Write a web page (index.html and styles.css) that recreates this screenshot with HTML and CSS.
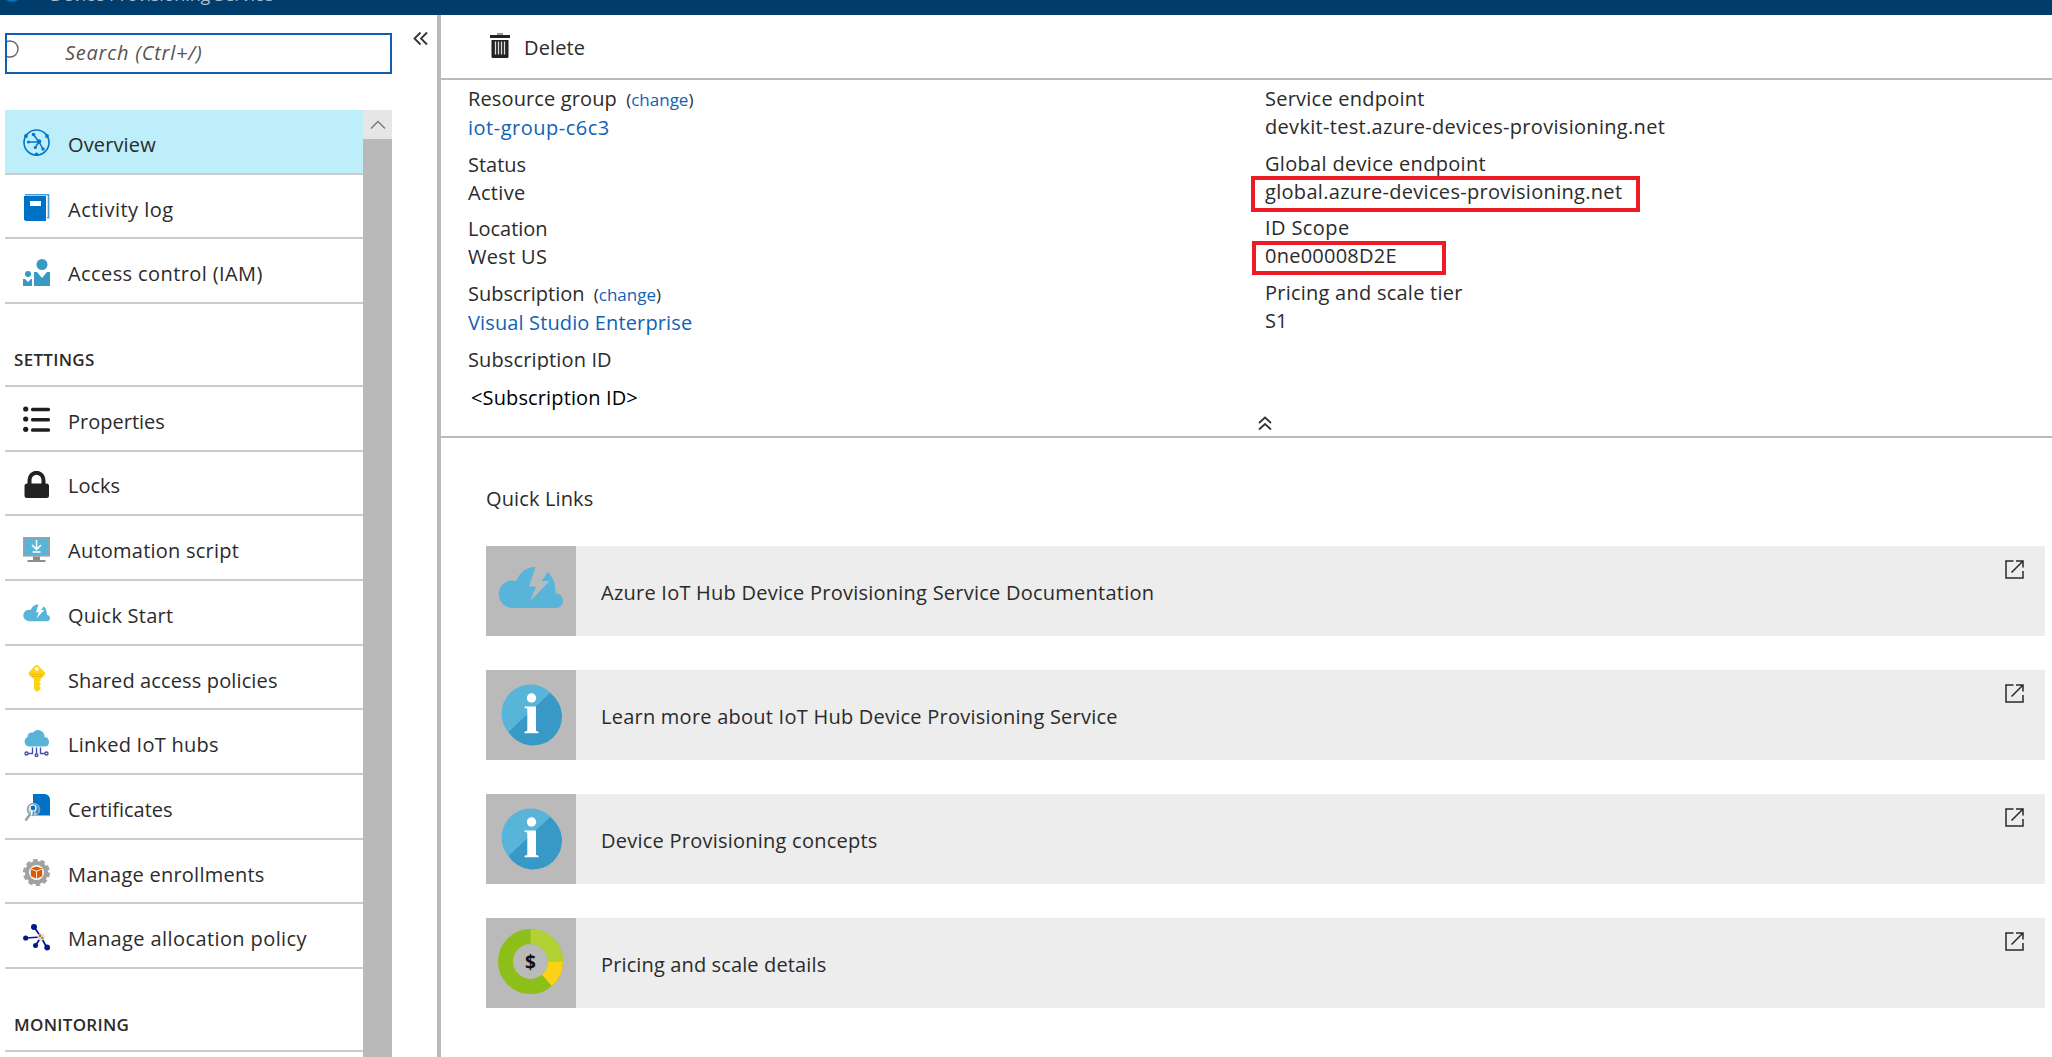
FILE: index.html
```html
<!DOCTYPE html>
<html lang="en">
<head>
<meta charset="utf-8">
<title>Device Provisioning Service</title>
<link rel="stylesheet" href="styles.css">
</head>
<body>
<header class="topbar"><svg class="topbar-icon" viewBox="0 0 20 20"><circle cx="10" cy="10" r="10" fill="#0072c6"/></svg><span class="topbar-title">Device Provisioning Service</span></header>
<div class="shell">
  <aside class="sidebar">
    <div class="sidebar-top">
      <div class="search">
        <svg class="search-icon" viewBox="0 0 12 18"><circle cx="3" cy="9" r="8" fill="none" stroke="#666" stroke-width="1.4"/></svg>
        <span class="search-hint">Search (Ctrl+/)</span>
      </div>
      <svg class="collapse" viewBox="0 0 16 16"><path d="M7.500 1.500 1.500 7.500l6 6M14 1.500 8 7.500l6 6" fill="none" stroke="#333" stroke-width="1.800"/></svg>
    </div>
    <div class="menu-wrap">
      <nav class="menu">
        <a class="item active"><svg class="icon" viewBox="0 0 27 27"><g fill="none" stroke="#0078d0"><circle cx="13.500" cy="13.500" r="12.500" stroke-width="1.600"/><path d="M16 13 5 13M16 13 10.500 5.500M16 13l4 7M16 13l-3.500 5" stroke-width="1.500"/></g><g fill="#0078d0"><circle cx="16" cy="12.500" r="2.300"/><circle cx="5.500" cy="13" r="1.600"/><circle cx="10.500" cy="5.500" r="1.800"/><circle cx="20" cy="20" r="1.700"/><circle cx="12.300" cy="18.500" r="1.600"/><circle cx="3" cy="7" r="1.900"/><circle cx="24" cy="7" r="1.900"/><circle cx="13.500" cy="25.300" r="1.800"/></g></svg><span class="sp-1">Overview</span></a>
        <a class="item"><svg class="icon" viewBox="0 0 27 27"><path d="M2 .8h23.500v23H24" fill="none" stroke="#4a9bd8" stroke-width="1.600"/><path d="M1 2h22v25H2.500L1 25.500z" fill="#0072c6"/><rect x="7" y="7" width="11" height="5" fill="#fff"/></svg><span class="sp-5">Activity log</span></a>
        <a class="item"><svg class="icon" viewBox="0 0 27 27"><g fill="#3999c6"><circle cx="19" cy="5.500" r="5.500"/><path d="M11 27V13h3l5 6 5-6h3v14z"/><circle cx="5" cy="15" r="3"/><path d="M0 27v-7h2l3 3 3-3h1v7z"/></g></svg><span class="sp-4">Access control (IAM)</span></a>
        <h2 class="group">SETTINGS</h2>
        <a class="item"><svg class="icon" viewBox="0 0 27 27"><g fill="#1e1e1e"><circle cx="2.700" cy="3" r="2.600"/><circle cx="2.700" cy="13" r="2.600"/><circle cx="2.700" cy="23.300" r="2.600"/><rect x="8" y="1.800" width="19" height="3.500" rx="1.500"/><rect x="8" y="12" width="19" height="3.500" rx="1.500"/><rect x="8" y="22.200" width="19" height="3.500" rx="1.500"/></g></svg><span>Properties</span></a>
        <a class="item"><svg class="icon" viewBox="0 0 27 27"><path d="M6.500 14V9a7 7.200 0 0 1 14 0v5" fill="none" stroke="#222" stroke-width="4"/><rect x="1.500" y="12.500" width="24.500" height="14.500" rx="2.500" fill="#222"/></svg><span>Locks</span></a>
        <a class="item"><svg class="icon" viewBox="0 0 27 27"><rect x=".8" y="1.800" width="25.400" height="18" fill="#59b4d9" stroke="#a0a1a2" stroke-width="1.600"/><path d="M10 20.500h7v3.500h5.500v2h-18v-2H10z" fill="#8c8d8e"/><path d="M13.500 4v9M9 9l4.500 4.500L18 9M9.500 16h8" fill="none" stroke="#fff" stroke-width="1.600"/></svg><span class="sp-2">Automation script</span></a>
        <a class="item"><svg class="icon" viewBox="0 0 65 65"><path d="M30 17h22v22H30z" fill="#fff"/><use href="#cloud" y="10"/></svg><span class="sp-2">Quick Start</span></a>
        <a class="item"><svg class="icon" viewBox="0 0 27 27"><path d="M12 .8q1.700-1.600 3.400 0l6 6.200q1.400 1.700 0 3.200L17.500 14v2l-1.500 1 1.500 1.200v1.600L16 21l1.500 1.300V24l-3.500 3-3-3V14L6.200 10.200q-1.400-1.600 0-3.200z" fill="#fcd116"/><circle cx="13.800" cy="4" r="2" fill="#fff"/><path d="M8.500 9.500h10.500M8.500 11.500h10.500" stroke="#e5b800" stroke-width=".8"/></svg><span class="sp-1">Shared access policies</span></a>
        <a class="item"><svg class="icon" viewBox="0 0 27 27"><path d="M6 16.500A5 5 0 0 1 4.500 7Q4.500 2 10 2.500q4-4.500 9-1 3 2 2.500 5.500 4.500.5 4.500 5 0 4.500-5 4.500z" fill="#59b4d9"/><g fill="none" stroke="#4450b0" stroke-width="1.400"><path d="M9.500 17.500v6H5M13.500 17.500V24M17.500 17.500v6H22"/><circle cx="3.500" cy="23.500" r="1.500"/><circle cx="13.500" cy="25.300" r="1.300"/><circle cx="23.500" cy="23.500" r="1.500"/></g></svg><span class="sp-2">Linked IoT hubs</span></a>
        <a class="item"><svg class="icon" viewBox="0 0 27 27"><path d="M10 0h12q5 1 5 6v15.500H10z" fill="#0072c6"/><path d="M8 19l-5.500 7.500" stroke="#a0a1a2" stroke-width="2.500"/><circle cx="10.500" cy="15.500" r="6" fill="#59b4d9" fill-opacity=".5" stroke="#a0a1a2" stroke-width="1.600"/><circle cx="10" cy="14" r="3" fill="#0072c6" stroke="#fff" stroke-width="1.200"/><path d="M8.500 17.500v4M12 17.500v4" stroke="#fff"/></svg><span>Certificates</span></a>
        <a class="item"><svg class="icon" viewBox="0 0 27 27"><circle cx="13.500" cy="13.500" r="11.900" fill="none" stroke="#a0a1a2" stroke-width="3.200" stroke-dasharray="4.400 3.080"/><circle cx="13.500" cy="13.500" r="9.500" fill="#fff" stroke="#a0a1a2" stroke-width="4"/><path d="M13.500 7.500l5.700 2v7.500l-5.700 3-5.700-3V9.500z" fill="#dd5900"/><path d="M8 10l5.500 2.200L19 10M13.500 12v8" fill="none" stroke="#fff" stroke-width=".9"/></svg><span class="sp-2">Manage enrollments</span></a>
        <a class="item"><svg class="icon" viewBox="0 0 27 27"><path d="M18 13 11 3M18 13 2.500 14M18 13l-5.500 8.500M18 13l6 11" stroke="#00188f" stroke-width="1.700"/><g fill="#00188f"><circle cx="11" cy="3" r="3"/><circle cx="2.700" cy="14" r="2.600"/><circle cx="12.500" cy="21.500" r="2.500"/><circle cx="24.200" cy="23.500" r="2.900"/></g><circle cx="18" cy="13" r="3.500" fill="#d8d8ea"/><path d="M16 13h2v-2.500h-2z" fill="#dd5900"/><path d="M18 13h2.500v2H18z" fill="#7fba00"/></svg><span class="sp-4">Manage allocation policy</span></a>
        <h2 class="group">MONITORING</h2>
      </nav>
      <div class="scrollbar"><div class="scroll-up"><svg viewBox="0 0 16 10"><path d="M1 8.500 8 1.500l7 7" fill="none" stroke="#777" stroke-width="1.400"/></svg></div></div>
    </div>
  </aside>
  <main class="main">
    <div class="toolbar">
      <svg class="trash" viewBox="0 0 20 26"><rect x="7" y="0" width="6" height="2" fill="#999"/><rect x="0" y="2" width="20" height="3" fill="#222"/><path d="M1.500 7h17v16.500q0 1.500-1.500 1.500H3q-1.500 0-1.500-1.500z" fill="#222"/><path d="M5.500 8.500v13M8.500 8.500v13M11.500 8.500v13M14.500 8.500v13" stroke="#ddd" stroke-width="1.300"/></svg>
      <span class="sp-1">Delete</span>
    </div>
    <section class="essentials">
      <dl class="facts">
        <div class="fact"><dt><span class="sp-1">Resource group</span> <small>(<a class="link">change</a>)</small></dt><dd class="sp-5"><a class="link">iot-group-c6c3</a></dd></div>
        <div class="fact"><dt>Status</dt><dd class="sp-3">Active</dd></div>
        <div class="fact"><dt>Location</dt><dd class="sp-3">West US</dd></div>
        <div class="fact"><dt>Subscription <small>(<a class="link">change</a>)</small></dt><dd class="sp-1"><a class="link">Visual Studio Enterprise</a></dd></div>
        <div class="fact"><dt class="cut sp-1">Subscription ID</dt><dd class="sub-id sp-1">&lt;Subscription ID&gt;</dd></div>
      </dl>
      <dl class="facts">
        <div class="fact"><dt class="sp-2">Service endpoint</dt><dd class="sp-3">devkit-test.azure-devices-provisioning.net</dd></div>
        <div class="fact"><dt class="sp-3">Global device endpoint</dt><dd class="marked sp-3"><span>global.azure-devices-provisioning.net</span><i class="mark mark-endpoint"></i></dd></div>
        <div class="fact"><dt class="sp-4">ID Scope</dt><dd class="marked sp-2"><span>0ne00008D2E</span><i class="mark mark-scope"></i></dd></div>
        <div class="fact"><dt class="sp-2">Pricing and scale tier</dt><dd>S1</dd></div>
      </dl>
      <svg class="fold" viewBox="0 0 14 15"><path d="M1 7l6-5.500L13 7M1 13.500 7 8l6 5.500" fill="none" stroke="#333" stroke-width="1.700"/></svg>
    </section>
    <section class="links">
      <h3 class="sp-1">Quick Links</h3>
      <a class="card"><span class="tile"><svg class="tile-icon" viewBox="0 0 65 65"><use href="#cloud" y="10"/></svg></span><span class="label sp-2">Azure IoT Hub Device Provisioning Service Documentation</span><svg class="ext" viewBox="0 0 19 19"><use href="#ext"/></svg></a>
      <a class="card"><span class="tile"><svg class="tile-icon" viewBox="0 0 65 65"><use href="#info"/></svg></span><span class="label sp-2">Learn more about IoT Hub Device Provisioning Service</span><svg class="ext" viewBox="0 0 19 19"><use href="#ext"/></svg></a>
      <a class="card"><span class="tile"><svg class="tile-icon" viewBox="0 0 65 65"><use href="#info"/></svg></span><span class="label sp-2">Device Provisioning concepts</span><svg class="ext" viewBox="0 0 19 19"><use href="#ext"/></svg></a>
      <a class="card"><span class="tile"><svg class="tile-icon" viewBox="0 0 65 65"><g fill="none" stroke-width="15" transform="translate(32.500 32.500)"><circle r="25" stroke="#8cbf1a"/><path d="M0-25A25 25 0 0 1 25 0" stroke="#b2d233"/><path d="M25 0A25 25 0 0 1 16.400 18.900" stroke="#fcd116"/></g><text x="32.500" y="39.500" text-anchor="middle" class="dollar">$</text></svg></span><span class="label sp-1">Pricing and scale details</span><svg class="ext" viewBox="0 0 19 19"><use href="#ext"/></svg></a>
    </section>
  </main>
</div>
<svg class="defs" width="0" height="0"><defs>
  <g id="cloud"><path d="M14 41A13.800 13.800 0 1 1 18.500 14Q23.500.5 37.500 0L31 19.500h7L32.500 34 51.500 14h-8L50 5Q58 13 57.500 26 65 27 65 34 64.500 41 57.500 41z" fill="#59b4d9"/></g>
  <g id="info"><circle cx="32.500" cy="32.500" r="29" fill="#59b4d9"/><path d="M52 12A29 29 0 1 1 10.500 51z" fill="#3999c6"/><circle cx="33.500" cy="17" r="4.700" fill="#fff"/><path d="M26.500 25.500h11.500v24q0 1 2.500 1.300v1.400h-14v-1.400q2.800-.3 2.800-1.300v-21q0-1.500-2.800-1.700z" fill="#fff"/></g>
  <g id="ext" fill="none" stroke="#2a2a2a" stroke-width="1.500"><path d="M8.500 1H1v17h17v-7M11 1h7v6.500M6.500 12.500 18 1"/></g>
</defs></svg>
</body>
</html>
```
FILE: styles.css
```css
* { box-sizing: border-box; }
body {
  margin: 0;
  height: 1057px;
  overflow: hidden;
  display: flex;
  flex-direction: column;
  background: #fff;
  color: #2b2b2b;
  font: 20px/28px "Open Sans", "Noto Sans", sans-serif;
}
h2, h3, dl, dd, dt { margin: 0; font: inherit; }
.defs { position: absolute; }

/* tracking steps */
.sp-1 { letter-spacing: .13px; }
.sp-2 { letter-spacing: .24px; }
.sp-3 { letter-spacing: .31px; }
.sp-4 { letter-spacing: .4px; }
.sp-5 { letter-spacing: .5px; }

.topbar {
  flex: none;
  height: 15px;
  overflow: hidden;
  background: #003d6d;
  display: flex;
  align-items: flex-start;
}
.topbar-icon { width: 20px; height: 20px; margin: -18px 28px 0 2px; }
.topbar-title { margin-top: -19px; line-height: 26px; font-size: 18px; letter-spacing: -.15px; color: #a9bccb; white-space: nowrap; }
.shell { flex: 1; min-height: 0; display: flex; }
.sidebar {
  flex: none;
  width: 441px;
  padding-left: 5px;
  border-right: 4px solid #bababa;
  display: flex;
  flex-direction: column;
}
.sidebar-top { flex: none; height: 95px; padding-top: 18px; display: flex; align-items: flex-start; }
.search {
  width: 387px;
  height: 41px;
  border: 2px solid #0c5fb3;
  display: flex;
  align-items: flex-start;
}
.search-icon { width: 12px; height: 18px; margin-top: 5px; }
.search-hint { margin-left: 46px; line-height: 36px; font-style: italic; letter-spacing: .75px; color: #555; }
.collapse { width: 16px; height: 16px; margin: -2px 0 0 21px; }
.menu-wrap { flex: 1; min-height: 0; display: flex; }
.menu { width: 358px; overflow: hidden; }
.item {
  height: 64.700px;
  padding: 7px 0 0 18px;
  border-bottom: 2px solid #cbcbcb;
  display: flex;
  align-items: center;
  gap: 18px;
}
.item.active { background: #bdeefa; }
.icon { width: 27px; height: 27px; margin-bottom: 4px; flex: none; }
.group {
  height: 82.900px;
  padding: 42px 0 0 9px;
  border-bottom: 2px solid #cbcbcb;
  font-size: 17px;
  font-weight: 600;
  letter-spacing: .3px;
}
.scrollbar { width: 29px; background: #b9b9b9; }
.scroll-up { height: 29px; background: #e6e6e6; display: flex; align-items: center; justify-content: center; }
.scroll-up svg { width: 16px; height: 10px; }
.main { flex: 1; min-width: 0; display: flex; flex-direction: column; }
.toolbar {
  flex: none;
  height: 65px;
  padding: 2px 0 0 49px;
  border-bottom: 2px solid #bababa;
  display: flex;
  align-items: center;
  gap: 14px;
}
.trash { width: 20px; height: 26px; margin-bottom: 3px; }
.essentials {
  flex: none;
  height: 358px;
  padding: 5px 0 0 27px;
  border-bottom: 2px solid #bababa;
  display: grid;
  grid-template-columns: 797px 1fr;
  position: relative;
}
.fact { margin-bottom: 8.700px; }
.link { color: #0f62b4; }
small { font-size: 17px; margin-left: 4px; }
.cut { height: 24px; overflow: hidden; }
.sub-id { padding: 14px 0 0 3px; color: #000; }
.marked { position: relative; }
.mark { position: absolute; border: 4px solid #ed1c24; }
.mark-endpoint { left: -14px; top: -2px; width: 389px; height: 36px; }
.mark-scope { left: -13px; top: -1px; width: 194px; height: 34px; }
.fold { position: absolute; left: 817px; bottom: 5px; width: 14px; height: 15px; }
.links { padding: 47px 7px 0 45px; display: flex; flex-direction: column; }
.links h3 { height: 61px; }
.card { height: 90px; margin-bottom: 34px; background: #ededed; display: flex; align-items: center; }
.tile { width: 90px; height: 90px; padding: 0 2px 3px 0; background: #bababa; display: flex; align-items: center; justify-content: center; }
.tile-icon { width: 65px; height: 65px; }
.dollar { font: 700 19px "Open Sans", sans-serif; fill: #111; }
.label { flex: 1; margin-left: 25px; padding-top: 3px; }
.ext { width: 19px; height: 19px; align-self: flex-start; margin: 14px 21px 0 0; }
```
